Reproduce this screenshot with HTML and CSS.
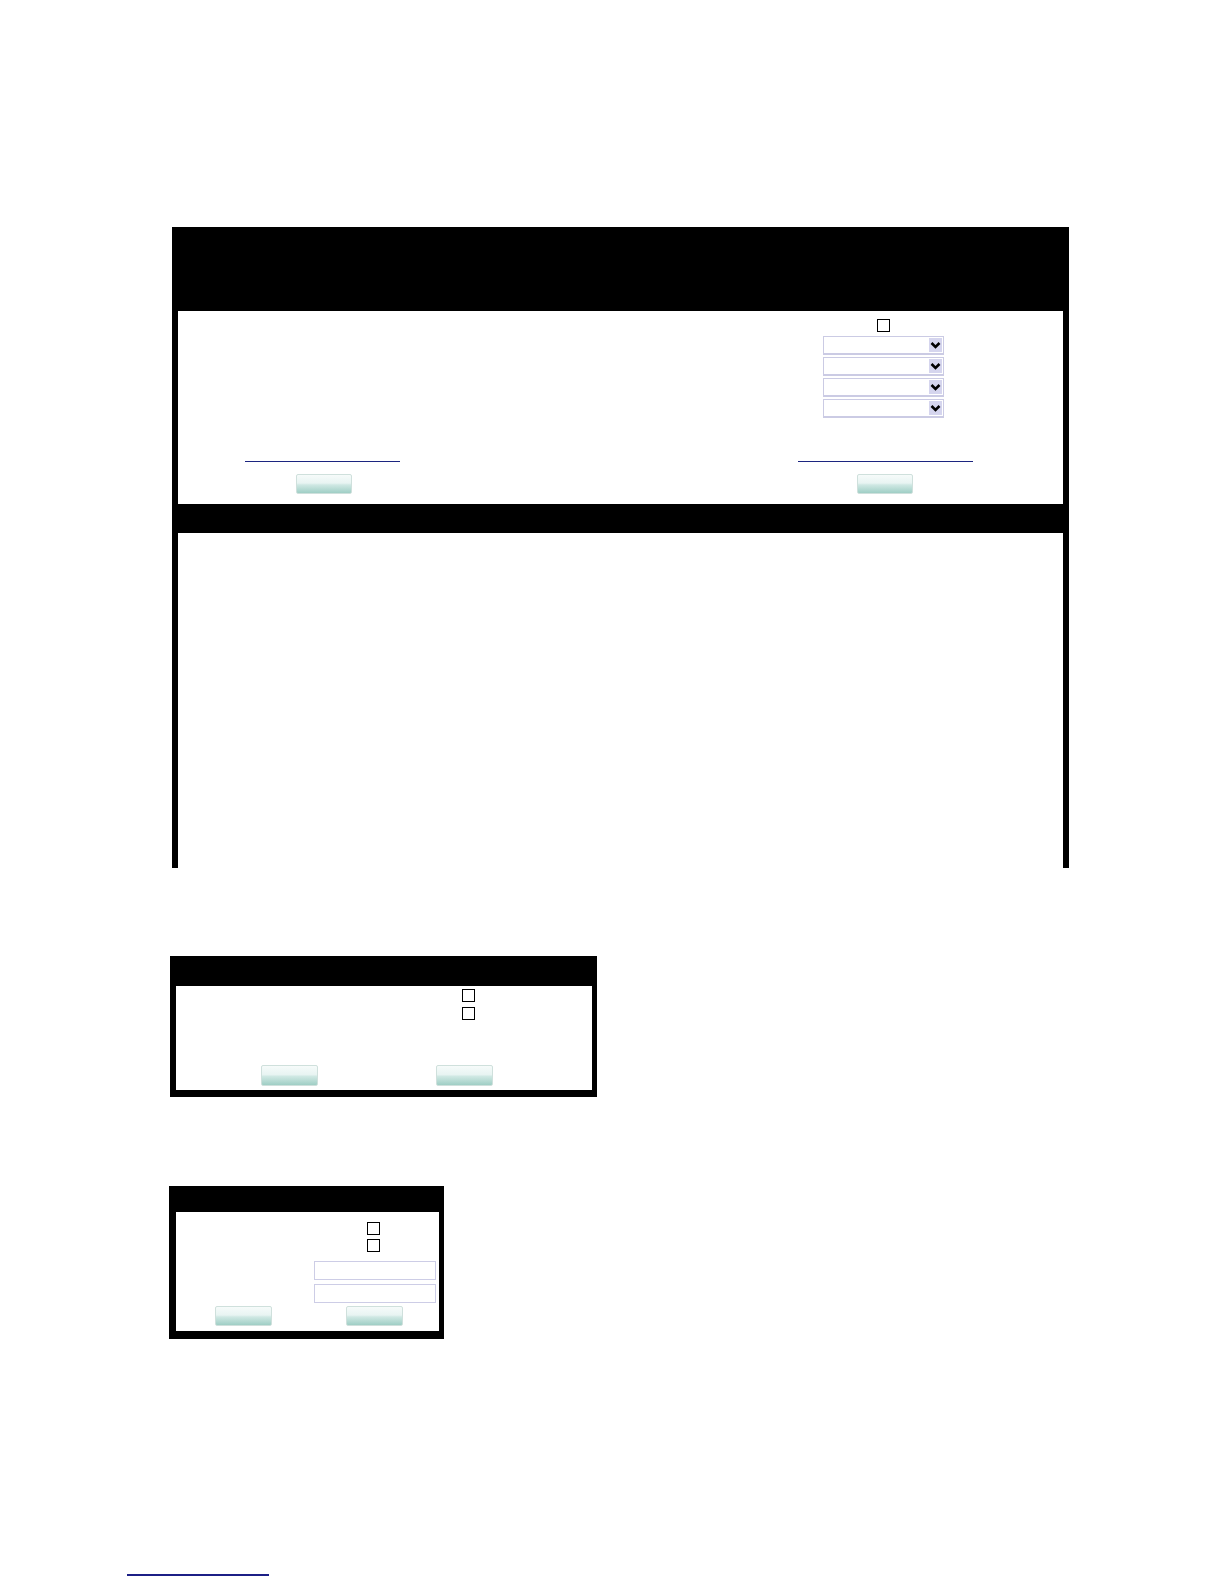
FILE: index.html
```html
<!DOCTYPE html>
<html>
<head>
<meta charset="utf-8">
<title>Form</title>
<link rel="stylesheet" href="styles.css">
</head>
<body>
<div class="panel panel1">
  <div class="p1-head"></div>
  <div class="p1-body">
    <div class="col col-left">
      <a class="ulink ulink-left" href="#"></a>
      <button class="btn" type="button"></button>
    </div>
    <div class="col-mid"></div>
    <div class="col col-right">
      <input class="cb" type="checkbox">
      <div class="select first"><span class="arrow"><svg width="13" height="14" viewBox="0 0 13 14"><path d="M2.5 5 L6.5 9 L10.5 5" fill="none" stroke="#000" stroke-width="2.6"/></svg></span></div>
      <div class="select"><span class="arrow"><svg width="13" height="14" viewBox="0 0 13 14"><path d="M2.5 5 L6.5 9 L10.5 5" fill="none" stroke="#000" stroke-width="2.6"/></svg></span></div>
      <div class="select"><span class="arrow"><svg width="13" height="14" viewBox="0 0 13 14"><path d="M2.5 5 L6.5 9 L10.5 5" fill="none" stroke="#000" stroke-width="2.6"/></svg></span></div>
      <div class="select"><span class="arrow"><svg width="13" height="14" viewBox="0 0 13 14"><path d="M2.5 5 L6.5 9 L10.5 5" fill="none" stroke="#000" stroke-width="2.6"/></svg></span></div>
      <a class="ulink ulink-right" href="#"></a>
      <button class="btn" type="button"></button>
    </div>
  </div>
  <div class="p1-bar"></div>
  <div class="p1-lower"></div>
</div>

<div class="panel panel2">
  <div class="p2-head"></div>
  <div class="p2-body">
    <input class="cb p2-cb" type="checkbox">
    <input class="cb p2-cb second" type="checkbox">
    <div class="p2-buttons">
      <button class="btn btn-wide" type="button"></button>
      <button class="btn btn-wide" type="button"></button>
    </div>
  </div>
</div>

<div class="panel panel3">
  <div class="p3-head"></div>
  <div class="p3-body">
    <input class="cb p3-cb" type="checkbox">
    <input class="cb p3-cb second" type="checkbox">
    <input class="field first" type="text">
    <input class="field" type="text">
    <div class="p3-buttons">
      <button class="btn btn-wide" type="button"></button>
      <button class="btn btn-wide" type="button"></button>
    </div>
  </div>
</div>

<a class="ulink footer-link" href="#"></a>
</body>
</html>
```

FILE: styles.css
```css
html, body {
  margin: 0;
  padding: 0;
  background: #ffffff;
  font-family: "Liberation Sans", Arial, sans-serif;
}

.panel {
  background: #000;
  box-sizing: border-box;
}

/* Panel 1 */
.panel1 {
  margin: 227px 0 0 172px;
  width: 897px;
}
.p1-head { height: 84px; }
.p1-body {
  margin: 0 6px;
  height: 193px;
  background: #fff;
  display: grid;
  grid-template-columns: 292px 1fr 356px;
}
.col {
  display: flex;
  flex-direction: column;
  align-items: center;
  padding-bottom: 10px;
  box-sizing: border-box;
}
.col-left { justify-content: flex-end; }
.col-right { padding-top: 8px; }
.p1-bar { height: 29px; }
.p1-lower {
  margin: 0 6px;
  height: 335px;
  background: #fff;
}

.ulink {
  display: block;
  height: 0;
  border-bottom: 1px solid #1c2580;
}
.ulink-left { width: 155px; margin-bottom: 12px; margin-right: 3px; }
.ulink-right { width: 175px; margin-top: auto; margin-bottom: 12px; }

.cb {
  -webkit-appearance: none;
  appearance: none;
  display: block;
  width: 13px;
  height: 13px;
  margin: 0;
  border: 1.5px solid #000;
  border-radius: 0;
  background: #fff;
  box-sizing: border-box;
}
.col-right .cb { margin-right: 4px; }

.select {
  width: 121px;
  height: 19px;
  margin-top: 2px;
  margin-right: 3px;
  box-sizing: border-box;
  border: 1px solid #cbcbe4;
  border-bottom-width: 2px;
  background: #fff;
  display: flex;
  justify-content: flex-end;
  align-items: center;
  padding-right: 1px;
}
.select.first { margin-top: 4px; }
.arrow {
  display: flex;
  align-items: center;
  justify-content: center;
  width: 13px;
  height: 14px;
  background: #d5d5ee;
}
.arrow svg { display: block; }

.btn {
  display: block;
  width: 56px;
  height: 20px;
  padding: 0;
  margin: 0;
  border: 1px solid #cfe0dc;
  border-radius: 2px;
  background: linear-gradient(#f6fbfa 0%, #e8f4f2 45%, #cfe8e3 55%, #9fcec5 100%);
  box-sizing: border-box;
}
.btn-wide { width: 57px; height: 21px; }

/* Panel 2 */
.panel2 {
  margin: 88px 0 0 170px;
  width: 427px;
  padding-bottom: 7px;
}
.p2-head { height: 30px; }
.p2-body {
  margin: 0 5px 0 6px;
  height: 104px;
  background: #fff;
  padding-top: 3px;
  box-sizing: border-box;
}
.p2-cb { margin-left: 286px; }
.p2-cb.second { margin-top: 5px; }
.p2-buttons {
  display: flex;
  gap: 118px;
  margin: 45px 0 0 85px;
}

/* Panel 3 */
.panel3 {
  margin: 89px 0 0 169px;
  width: 275px;
  padding-bottom: 8px;
}
.p3-head { height: 26px; }
.p3-body {
  margin: 0 5px 0 7px;
  height: 119px;
  background: #fff;
  padding-top: 10px;
  box-sizing: border-box;
}
.p3-cb { margin-left: 191px; }
.p3-cb.second { margin-top: 4px; }
.field {
  display: block;
  width: 122px;
  height: 19px;
  margin: 4px 0 0 138px;
  padding: 0;
  border: 1.5px solid #cdcde6;
  border-radius: 0;
  background: #fff;
  box-sizing: border-box;
}
.field.first { margin-top: 9px; }
.p3-buttons {
  display: flex;
  gap: 74px;
  margin: 3px 0 0 39px;
}
.p3-buttons .btn { height: 20px; }

.footer-link {
  width: 142px;
  margin: 235px 0 0 127px;
  border-bottom: 2px solid #1c1f86;
}
```
